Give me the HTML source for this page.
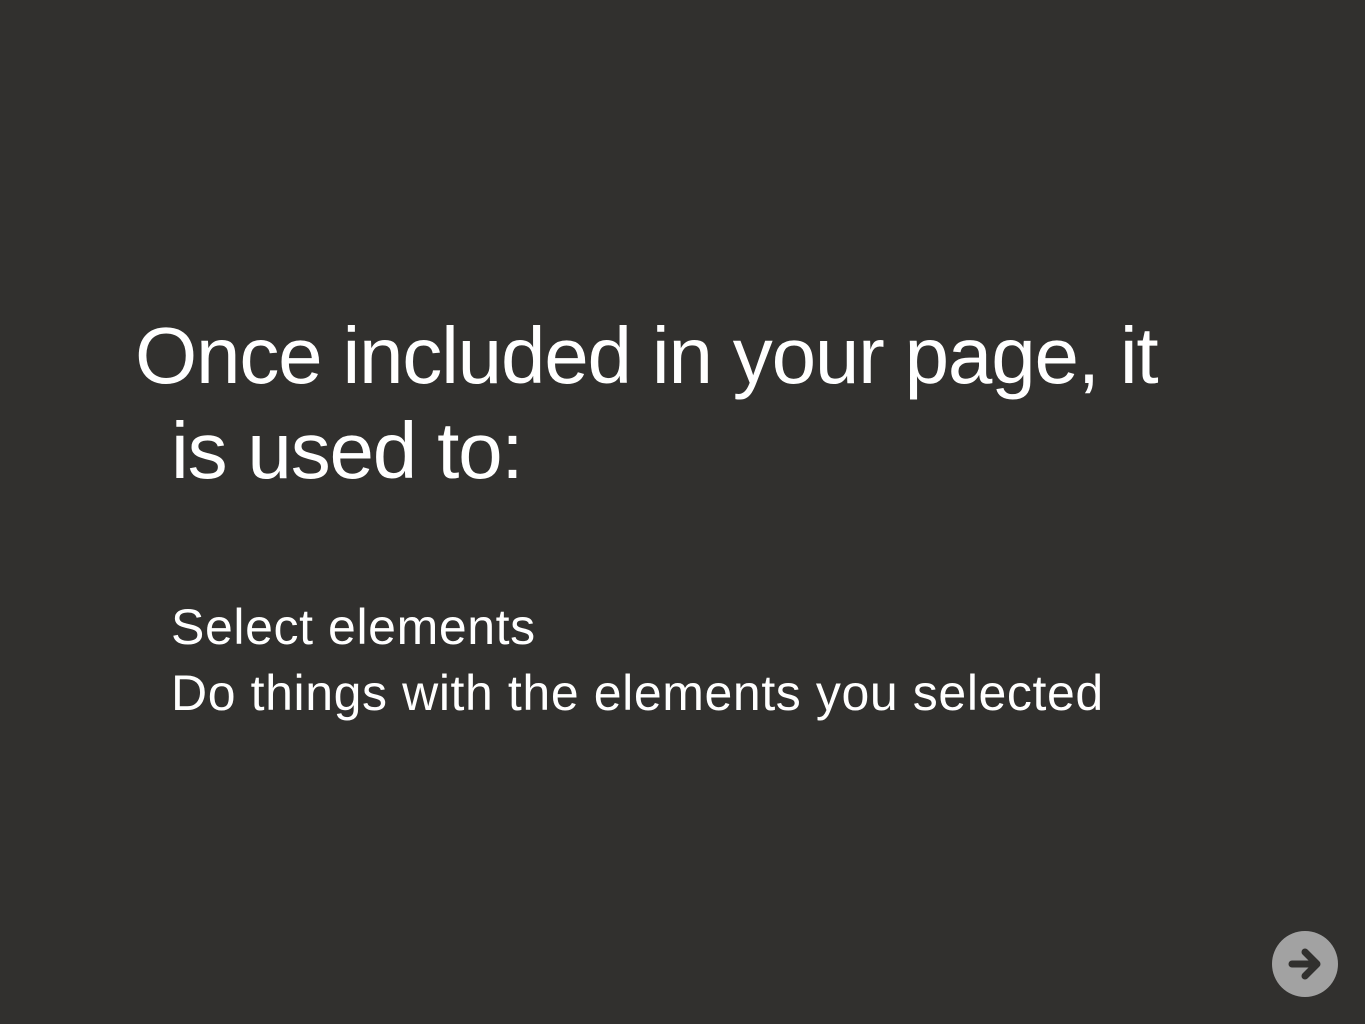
<!DOCTYPE html>
<html><head><style>
html,body{margin:0;padding:0;width:1365px;height:1024px;background:#31302e;overflow:hidden}
.t{position:absolute;color:#fff;font-family:"Liberation Sans",Arial,sans-serif;white-space:nowrap}
.h{font-size:80px;line-height:95px;letter-spacing:-1.2px}
.b{font-size:50px;line-height:66px;letter-spacing:0.6px}
</style></head><body>
<div class="t h" style="left:135px;top:308px">Once included in your page, it</div>
<div class="t h" style="left:171px;top:403px">is used to:</div>
<div class="t b" style="left:171px;top:594px">Select elements</div>
<div class="t b" style="left:171px;top:660px">Do things with the elements you selected</div>
<svg style="position:absolute;left:1271px;top:930px" width="68" height="68" viewBox="0 0 68 68">
<circle cx="34" cy="34" r="33" fill="#a2a2a2"/>
<path d="M21 34H45M34 22L46 34L34 46" stroke="#31302e" stroke-width="7" stroke-linecap="round" stroke-linejoin="round" fill="none"/>
</svg>
</body></html>
